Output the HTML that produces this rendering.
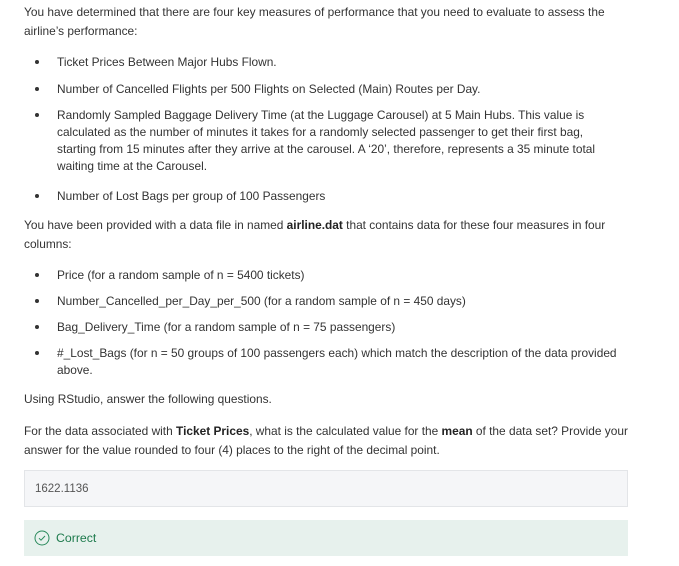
<!DOCTYPE html>
<html><head><meta charset="utf-8"><style>
html,body{margin:0;padding:0;background:#fff;width:679px;height:566px;overflow:hidden}
body{font-family:"Liberation Sans",sans-serif;font-size:11.9px;color:#333;position:relative}
.l{position:absolute;white-space:nowrap;line-height:16px}
.b{position:absolute;width:4px;height:4px;border-radius:50%;background:#333}
b{font-weight:bold;color:#222}
.box{position:absolute;left:24px;width:604px;box-sizing:border-box}
</style></head><body>
<div class="l" style="left:24px;top:4px">You have determined that there are four key measures of performance that you need to evaluate to assess the</div>
<div class="l" style="left:24px;top:23px">airline’s performance:</div>

<div class="b" style="left:35px;top:60px"></div><div class="l" style="left:57px;top:54px">Ticket Prices Between Major Hubs Flown.</div>
<div class="b" style="left:35px;top:87px"></div><div class="l" style="left:57px;top:81px">Number of Cancelled Flights per 500 Flights on Selected (Main) Routes per Day.</div>
<div class="b" style="left:35px;top:113px"></div><div class="l" style="left:57px;top:107px">Randomly Sampled Baggage Delivery Time (at the Luggage Carousel) at 5 Main Hubs. This value is</div>
<div class="l" style="left:57px;top:124px">calculated as the number of minutes it takes for a randomly selected passenger to get their first bag,</div>
<div class="l" style="left:57px;top:141px">starting from 15 minutes after they arrive at the carousel. A ‘20’, therefore, represents a 35 minute total</div>
<div class="l" style="left:57px;top:158px">waiting time at the Carousel.</div>
<div class="b" style="left:35px;top:194px"></div><div class="l" style="left:57px;top:188px">Number of Lost Bags per group of 100 Passengers</div>

<div class="l" style="left:24px;top:217px">You have been provided with a data file in named <b>airline.dat</b> that contains data for these four measures in four</div>
<div class="l" style="left:24px;top:236px">columns:</div>

<div class="b" style="left:35px;top:273px"></div><div class="l" style="left:57px;top:267px">Price (for a random sample of n = 5400 tickets)</div>
<div class="b" style="left:35px;top:299px"></div><div class="l" style="left:57px;top:293px">Number_Cancelled_per_Day_per_500 (for a random sample of n = 450 days)</div>
<div class="b" style="left:35px;top:325px"></div><div class="l" style="left:57px;top:319px">Bag_Delivery_Time (for a random sample of n = 75 passengers)</div>
<div class="b" style="left:35px;top:351px"></div><div class="l" style="left:57px;top:345px">#_Lost_Bags (for n = 50 groups of 100 passengers each) which match the description of the data provided</div>
<div class="l" style="left:57px;top:362px">above.</div>

<div class="l" style="left:24px;top:391px">Using RStudio, answer the following questions.</div>
<div class="l" style="left:24px;top:423px">For the data associated with <b>Ticket Prices</b>, what is the calculated value for the <b>mean</b> of the data set? Provide your</div>
<div class="l" style="left:24px;top:442px">answer for the value rounded to four (4) places to the right of the decimal point.</div>

<div class="box" style="top:470px;height:37px;background:#f5f6f8;border:1px solid #e3e5e8"></div>
<div class="l" style="left:35px;top:481px;font-size:11.5px;color:#555">1622.1136</div>

<div class="box" style="top:520px;height:36px;background:#e7f1ed"></div>
<svg style="position:absolute;left:34px;top:530px" width="16" height="16" viewBox="0 0 16 16"><circle cx="8" cy="8" r="7" fill="none" stroke="#2a8a5c" stroke-width="1"/><path d="M5 8.2l2 2 4-4.2" fill="none" stroke="#2a8a5c" stroke-width="1"/></svg>
<div class="l" style="left:56px;top:530px;color:#1d7a4c;font-size:12.3px">Correct</div>
</body></html>
